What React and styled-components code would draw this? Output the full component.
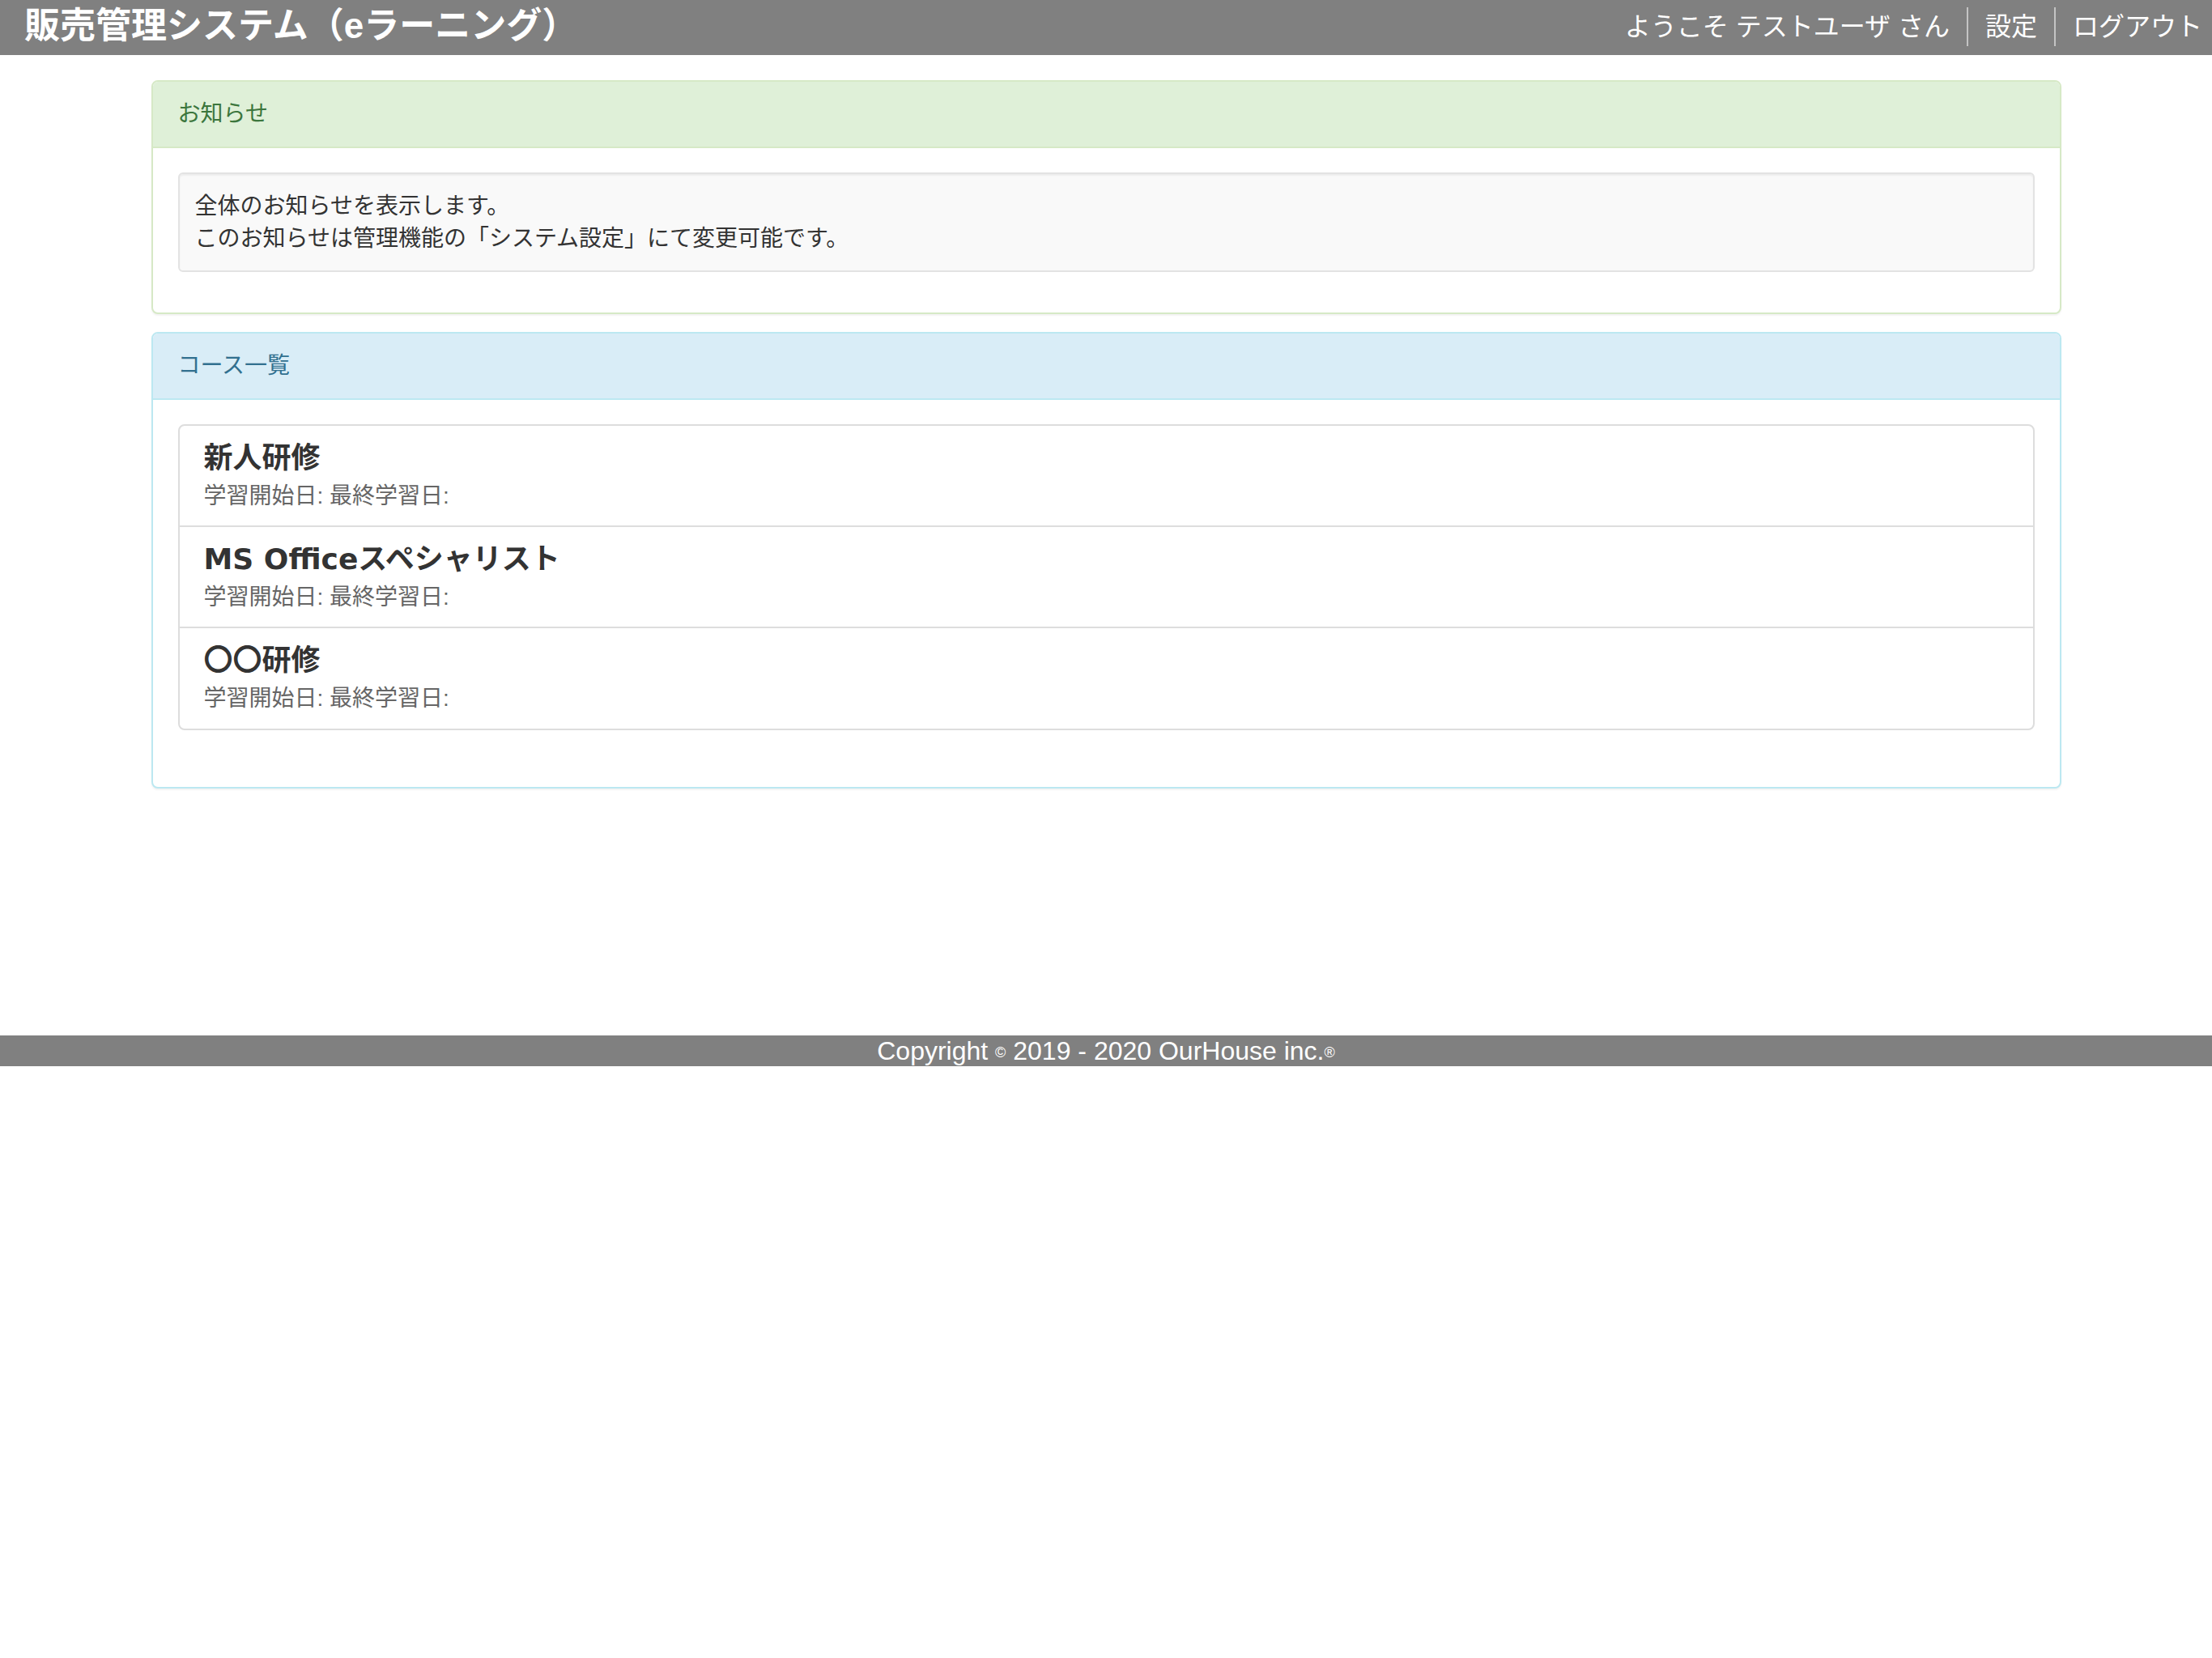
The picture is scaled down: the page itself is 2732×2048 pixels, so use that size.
import React from 'react';
import styled, { createGlobalStyle } from 'styled-components';

const courses = [
   { id: 1, name: '新人研修' },
   { id: 2, name: 'MS Officeスペシャリスト' },
   { id: 3, name: '〇〇研修' },
];

////////////////////////////////////////////////////
//////////////////// COMPONENT /////////////////////
////////////////////////////////////////////////////

export default function App() {
   return (
      <Page>
         <GlobalStyle />
         <Header>
            <Brand>販売管理システム（eラーニング）</Brand>
            <Nav>
               <NavItem>ようこそ テストユーザ さん</NavItem>
               <NavItem divider>設定</NavItem>
               <NavItem divider last>ログアウト</NavItem>
            </Nav>
         </Header>

         <Main>
            <Container>
               <Panel tone="success">
                  <PanelHeading tone="success">お知らせ</PanelHeading>
                  <PanelBody>
                     <Well>
                        全体のお知らせを表示します。<br />
                        このお知らせは管理機能の「システム設定」にて変更可能です。
                     </Well>
                  </PanelBody>
               </Panel>

               <Panel tone="info">
                  <PanelHeading tone="info">コース一覧</PanelHeading>
                  <PanelBody>
                     <ListGroup>
                        {courses.map((course) => (
                           <ListItem key={course.id}>
                              <CourseTitle>{course.name}</CourseTitle>
                              <CourseMeta>学習開始日: 最終学習日:</CourseMeta>
                           </ListItem>
                        ))}
                     </ListGroup>
                  </PanelBody>
               </Panel>
            </Container>
         </Main>

         <Footer>
            Copyright <Mark>©</Mark> 2019 - 2020 OurHouse inc.<Mark>®</Mark>
         </Footer>
      </Page>
   );
}

////////////////////////////////////////////////////
//////////////// STYLED COMPONENTS /////////////////
////////////////////////////////////////////////////

const tones = {
   success: { bg: '#dff0d8', border: '#d6e9c6', color: '#3c763d' },
   info: { bg: '#d9edf7', border: '#bce8f1', color: '#31708f' },
};

const GlobalStyle = createGlobalStyle`
   * { box-sizing: border-box; }
   body {
      margin: 0;
      background: #fff;
      color: #333;
      font-family: "Liberation Sans", "Noto Sans CJK JP", sans-serif;
   }
`;

const Page = styled.div`
   display: flex;
   flex-flow: column nowrap;
   width: 100%;
`;

const Header = styled.header`
   height: 68px;
   background: #808080;
   display: flex;
   flex-flow: row nowrap;
   align-items: center;
   justify-content: space-between;
   padding: 0 0 0 30px;
`;

const Brand = styled.h1`
   margin: 0 0 4px;
   color: #fff;
   font-size: 44px;
   font-weight: 700;
   line-height: 60px;
`;

const Nav = styled.nav`
   display: flex;
   flex-flow: row nowrap;
   align-items: center;
   margin-bottom: 2px;
`;

const NavItem = styled.a`
   color: #fff;
   font-size: 32px;
   line-height: 48px;
   padding: 0 ${({ last }) => (last ? '12px' : '21px')} 0 21px;
   border-left: ${({ divider }) => (divider ? '2px solid #c4c4c4' : 'none')};
   cursor: pointer;
`;

const Main = styled.main`
   min-height: 1211px;
   padding-top: 31px;
`;

const Container = styled.div`
   width: 2359px;
   margin: 0 auto;
`;

const Panel = styled.section`
   background: #fff;
   border: 2px solid ${({ tone }) => tones[tone].border};
   border-radius: 8px;
   margin-bottom: 22px;
   box-shadow: 0 2px 2px rgba(0, 0, 0, 0.05);
   overflow: hidden;
`;

const PanelHeading = styled.div`
   background: ${({ tone }) => tones[tone].bg};
   color: ${({ tone }) => tones[tone].color};
   border-bottom: 2px solid ${({ tone }) => tones[tone].border};
   padding: 20px 30px 20px 31px;
   font-size: 28px;
   line-height: 40px;
`;

const PanelBody = styled.div`
   padding: 30px 31px;
`;

const Well = styled.div`
   background: #f9f9f9;
   border: 2px solid #e3e3e3;
   border-radius: 6px;
   box-shadow: inset 0 2px 2px rgba(0, 0, 0, 0.05);
   padding: 20px 19px 19px;
   margin-bottom: 20px;
   font-size: 28px;
   line-height: 40px;
   color: #333;
`;

const ListGroup = styled.ul`
   list-style: none;
   margin: 0 0 40px;
   padding: 0;
   border: 2px solid #ddd;
   border-radius: 8px;
`;

const ListItem = styled.li`
   padding: 20px 30px 16px;
   border-bottom: 2px solid #ddd;
   &:last-child {
      border-bottom: none;
      padding-bottom: 17px;
   }
`;

const CourseTitle = styled.h4`
   margin: 0 0 7px;
   font-family: "DejaVu Sans", "Noto Sans CJK JP", sans-serif;
   font-size: 36px;
   font-weight: 600;
   line-height: 40px;
   color: #333;
`;

const CourseMeta = styled.p`
   margin: 0;
   font-size: 28px;
   line-height: 40px;
   color: #666;
`;

const Footer = styled.footer`
   height: 38px;
   background: #808080;
   color: #fff;
   text-align: center;
   font-size: 32px;
   line-height: 38px;
`;

const Mark = styled.span`
   font-size: 18px;
   vertical-align: 3px;
`;
